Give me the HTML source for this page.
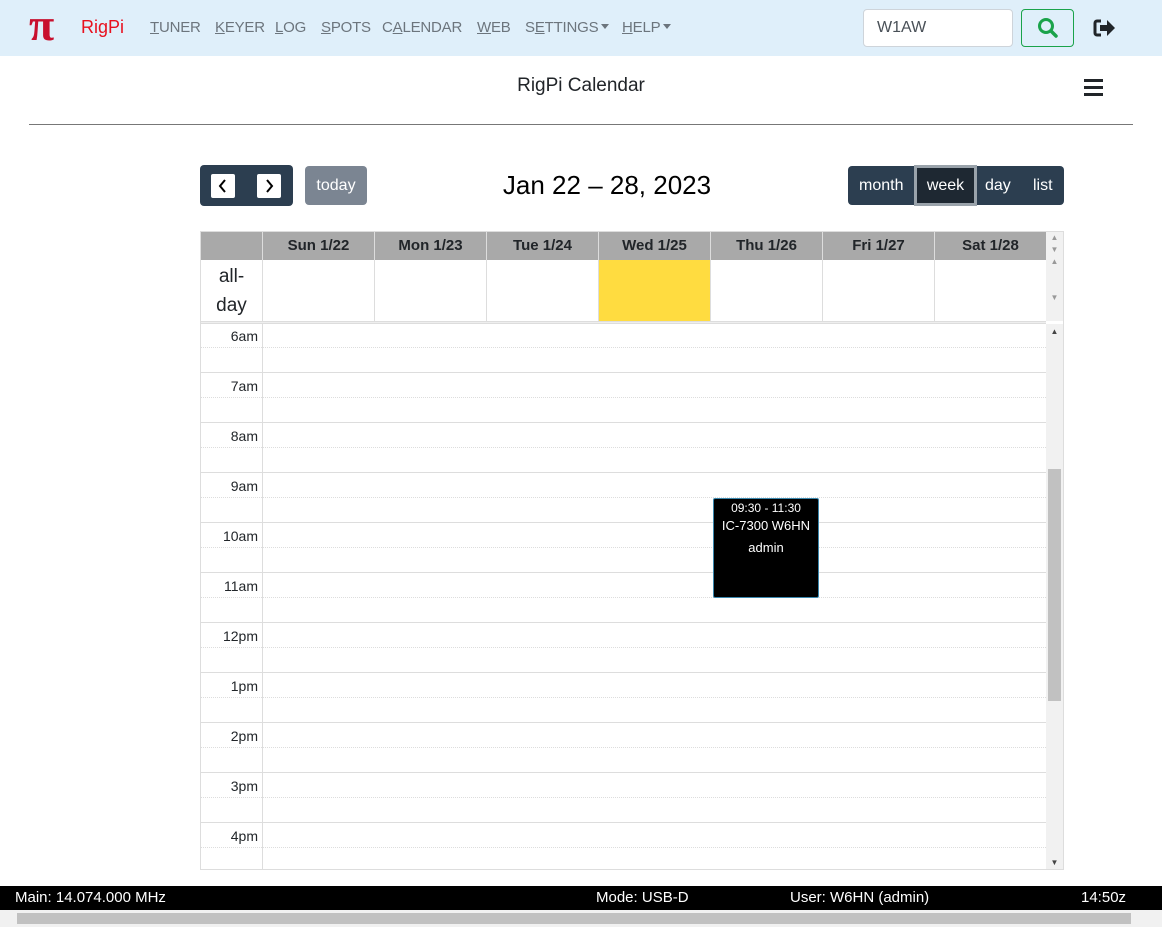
<!DOCTYPE html>
<html><head><meta charset="utf-8"><style>
*{box-sizing:border-box;margin:0;padding:0}
body{width:1162px;height:927px;overflow:hidden;background:#fff;font-family:"Segoe UI","Liberation Sans",sans-serif;color:#212529;position:relative}
.nav{position:absolute;left:0;top:0;width:1162px;height:56px;background:#dfeffa}
.nav a{position:absolute;top:19px;font-size:15px;color:#6c757d;text-decoration:none;letter-spacing:-0.2px}
.nav a u{text-decoration:underline}
.caret{display:inline-block;width:0;height:0;border-left:4px solid transparent;border-right:4px solid transparent;border-top:5px solid #6c757d;vertical-align:3px;margin-left:3px}
.abs{position:absolute}
.tbl{position:absolute;left:200px;top:231px;width:864px;height:639px;border:1px solid #ddd;overflow:hidden}
.hdr{position:absolute;top:0;height:28px;background:#a9a9a9;font-weight:bold;font-size:15px;text-align:center;line-height:28px;border-right:1px solid #ddd;color:#212529}
.col{position:absolute;border-right:1px solid #ddd}
.hl{position:absolute;left:0;width:845px;height:1px;background:#ddd}
.dl{position:absolute;left:0;width:845px;border-top:1px dotted #ddd}
.tl{position:absolute;left:0;width:57px;text-align:right;font-size:14px}
.foot{position:absolute;left:0;top:886px;width:1162px;height:24px;background:#000;color:#fff;font-size:15px;line-height:24px}
</style></head><body>
<div class="nav">
<div class="abs" style="left:29px;top:2px;font-size:46px;line-height:46px;color:#c8102e;font-family:'Liberation Serif',serif;font-weight:bold">π</div>
<div class="abs" style="left:81px;top:17px;font-size:18px;color:#e8101e">RigPi</div>
<a style="left:150px"><u>T</u>UNER</a>
<a style="left:215px"><u>K</u>EYER</a>
<a style="left:275px"><u>L</u>OG</a>
<a style="left:321px"><u>S</u>POTS</a>
<a style="left:382px">C<u>A</u>LENDAR</a>
<a style="left:477px"><u>W</u>EB</a>
<a style="left:525px">S<u>E</u>TTINGS<span class="caret"></span></a>
<a style="left:622px"><u>H</u>ELP<span class="caret"></span></a>
<div class="abs" style="left:863px;top:9px;width:150px;height:38px;background:#fff;border:1px solid #ced4da;border-radius:4px;padding:9px 13px;font-size:16px;color:#495057">W1AW</div>
<div class="abs" style="left:1021px;top:9px;width:53px;height:38px;border:1px solid #1aa34a;border-radius:4px">
<svg width="53" height="38" viewBox="0 0 53 38" style="position:absolute;left:-1px;top:-1px"><circle cx="25" cy="17" r="6.5" fill="none" stroke="#1aa34a" stroke-width="3"/><line x1="30" y1="22" x2="35" y2="27" stroke="#1aa34a" stroke-width="3.5" stroke-linecap="round"/></svg></div>
<svg class="abs" style="left:1093px;top:18px" width="24" height="20" viewBox="0 0 24 20"><path d="M8 3H4a2 2 0 0 0-2 2v10a2 2 0 0 0 2 2h4" fill="none" stroke="#212529" stroke-width="3"/><path d="M7 7h7V2l8 8-8 8v-5H7z" fill="#212529"/></svg>
</div>
<div class="abs" style="left:0;width:1162px;top:75px;text-align:center;font-size:19px">RigPi Calendar</div>
<div class="abs" style="left:1084px;top:79px;width:19px;height:3px;background:#212529;box-shadow:0 7px 0 #212529,0 14px 0 #212529"></div>
<div class="abs" style="left:29px;top:124px;width:1104px;height:1px;background:#777"></div>

<div class="abs" style="left:200px;top:165px;width:93px;height:41px;background:#2c3e50;border-radius:4px"></div>
<div class="abs" style="left:211px;top:174px;width:24px;height:24px;background:#fff;border-radius:2px">
<svg width="24" height="24"><path d="M14 6l-5 6 5 6" fill="none" stroke="#000" stroke-width="2"/></svg></div>
<div class="abs" style="left:257px;top:174px;width:24px;height:24px;background:#fff;border-radius:2px">
<svg width="24" height="24"><path d="M10 6l5 6-5 6" fill="none" stroke="#000" stroke-width="2"/></svg></div>
<div class="abs" style="left:305px;top:166px;width:62px;height:39px;background:#7b8592;border-radius:4px;color:#fff;font-size:16px;text-align:center;line-height:39px">today</div>
<div class="abs" style="left:407px;top:170px;width:400px;text-align:center;font-size:26px;color:#000;font-weight:500">Jan 22 – 28, 2023</div>
<div class="abs" style="left:848px;top:166px;width:216px;height:39px;background:#2c3e50;border-radius:4px;color:#fff;font-size:16px;line-height:39px">
<span class="abs" style="left:11px">month</span>
<span class="abs" style="left:66px;top:-1px;width:63px;height:41px;background:#1e2832;border:3px solid #9aa3ab;text-align:center;line-height:35px">week</span>
<span class="abs" style="left:137px">day</span>
<span class="abs" style="left:185px">list</span>
</div>

<div class="tbl">
<div class="hdr" style="left:0;width:62px"></div>
<div class="hdr" style="left:62px;width:112px">Sun 1/22</div>
<div class="hdr" style="left:174px;width:112px">Mon 1/23</div>
<div class="hdr" style="left:286px;width:112px">Tue 1/24</div>
<div class="hdr" style="left:398px;width:112px">Wed 1/25</div>
<div class="hdr" style="left:510px;width:112px">Thu 1/26</div>
<div class="hdr" style="left:622px;width:112px">Fri 1/27</div>
<div class="hdr" style="left:734px;width:112px">Sat 1/28</div>
<div class="abs" style="left:398px;top:28px;width:111px;height:61px;background:#ffdc40"></div>
<div class="col" style="left:0;top:28px;width:62px;height:61px;font-size:19px;text-align:center;line-height:29px;padding-top:2px">all-<br>day</div>
<div class="col" style="left:62px;top:28px;width:112px;height:61px"></div>
<div class="col" style="left:174px;top:28px;width:112px;height:61px"></div>
<div class="col" style="left:286px;top:28px;width:112px;height:61px"></div>
<div class="col" style="left:398px;top:28px;width:112px;height:61px"></div>
<div class="col" style="left:510px;top:28px;width:112px;height:61px"></div>
<div class="col" style="left:622px;top:28px;width:112px;height:61px"></div>
<div class="col" style="left:734px;top:28px;width:112px;height:61px"></div>
<div class="abs" style="left:0;top:89px;width:845px;height:3px;background:#eee;border-top:1px solid #ddd;border-bottom:1px solid #ddd"></div>
<div class="abs" style="left:845px;top:0;width:17px;height:89px;background:#f1f1f1;font-size:8px;color:#999;text-align:center;line-height:12px">▲<br>▼<br>▲<br><br><br>▼</div>
<div class="abs" style="left:61px;top:92px;width:1px;height:547px;background:#ddd"></div>
<div class="hl" style="top:140px"></div><div class="hl" style="top:190px"></div><div class="hl" style="top:240px"></div><div class="hl" style="top:290px"></div><div class="hl" style="top:340px"></div><div class="hl" style="top:390px"></div><div class="hl" style="top:440px"></div><div class="hl" style="top:490px"></div><div class="hl" style="top:540px"></div><div class="hl" style="top:590px"></div>
<div class="dl" style="top:115px"></div><div class="dl" style="top:165px"></div><div class="dl" style="top:215px"></div><div class="dl" style="top:265px"></div><div class="dl" style="top:315px"></div><div class="dl" style="top:365px"></div><div class="dl" style="top:415px"></div><div class="dl" style="top:465px"></div><div class="dl" style="top:515px"></div><div class="dl" style="top:565px"></div><div class="dl" style="top:615px"></div>
<div class="tl" style="top:96px">6am</div><div class="tl" style="top:146px">7am</div><div class="tl" style="top:196px">8am</div><div class="tl" style="top:246px">9am</div><div class="tl" style="top:296px">10am</div><div class="tl" style="top:346px">11am</div><div class="tl" style="top:396px">12pm</div><div class="tl" style="top:446px">1pm</div><div class="tl" style="top:496px">2pm</div><div class="tl" style="top:546px">3pm</div><div class="tl" style="top:596px">4pm</div>
<div class="abs" style="left:845px;top:92px;width:17px;height:547px;background:#f1f1f1;font-size:8px;color:#444;text-align:center"><div style="position:absolute;top:3px;width:17px">▲</div><div style="position:absolute;top:534px;width:17px">▼</div><div style="position:absolute;left:2px;top:145px;width:13px;height:232px;background:#c1c1c1"></div></div>
<div class="abs" style="left:512px;top:266px;width:106px;height:100px;background:#000;border:1px solid #3a87ad;border-radius:2px;color:#fff;text-align:center">
<div style="font-size:12px;margin-top:2px">09:30 - 11:30</div>
<div style="font-size:13px;line-height:22px">IC-7300 W6HN<br>admin</div></div>
</div>

<div class="foot">
<span class="abs" style="left:15px">Main: 14.074.000 MHz</span>
<span class="abs" style="left:596px">Mode: USB-D</span>
<span class="abs" style="left:790px">User: W6HN (admin)</span>
<span class="abs" style="left:1081px">14:50z</span>
</div>
<div class="abs" style="left:0;top:910px;width:1162px;height:17px;background:#f1f1f1"><div class="abs" style="left:17px;top:3px;width:1114px;height:11px;background:#c1c1c1"></div></div>
</body></html>
